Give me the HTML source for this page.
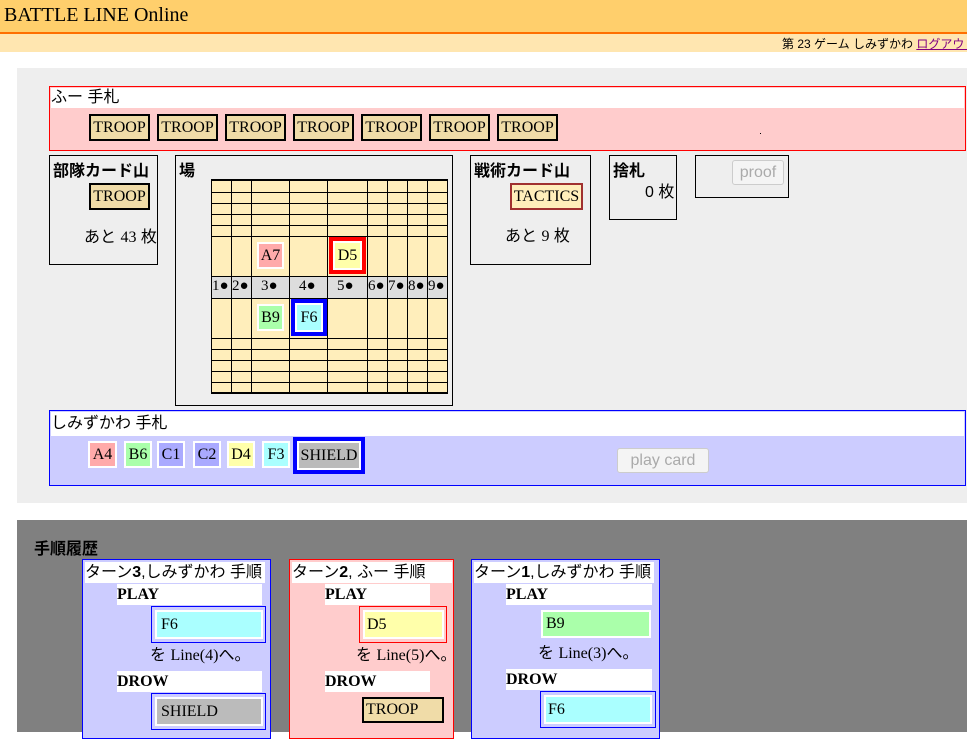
<!DOCTYPE html>
<html><head><meta charset="utf-8"><style>
*{margin:0;padding:0;box-sizing:border-box}
body{width:967px;height:732px;overflow:hidden;position:relative;background:#fff;font-family:"Liberation Serif","Noto Serif CJK SC",serif;font-size:16px;color:#000}
div,span{position:absolute}
.g{font-family:"Liberation Sans","Noto Sans CJK JP",sans-serif}
.bx{border:1px solid #000}
.c{display:flex;align-items:center;justify-content:center;font-size:16px}
.tr{background:#f0dca8;border:2px solid #000}
.w{border:2px solid #fff}
.t{font-family:"Liberation Sans","Noto Sans CJK JP",sans-serif;font-weight:bold;font-size:16px}
.btn{border:1px solid #ccc;border-radius:3px;background:#f4f4f4;color:#aaa;font-family:"Liberation Sans",sans-serif;font-size:16px;display:flex;align-items:center;justify-content:center}
.hl{left:0;height:1px;width:100%;background:#000}
.vl{top:0;width:1px;height:100%;background:#000}
</style></head><body>
<div style="left:0;top:0;width:967px;height:32px;background:#ffcf6c"></div>
<div style="left:0;top:32px;width:967px;height:2px;background:#ff6f00"></div>
<div style="left:4px;top:4px;font-size:20px">BATTLE LINE Online</div>
<div style="left:0;top:34px;width:967px;height:18px;background:#ffe6b0"></div>
<div class="g" style="left:782px;top:35px;font-size:12px;white-space:nowrap">第 23 ゲーム しみずかわ <span style="position:static;color:#800080;text-decoration:underline">ログアウト</span></div>

<div style="left:17px;top:68px;width:950px;height:435px;background:#eee"></div>
<div style="left:49px;top:86px;width:917px;height:65px;border:1px solid #f00;background:#ffcccc"></div>
<div class="g" style="left:51px;top:88px;width:913px;height:20px;background:#fff;font-size:16px;line-height:20px">ふー 手札</div>
<div class="c tr" style="left:89px;top:114px;width:61px;height:27px">TROOP</div>
<div class="c tr" style="left:157px;top:114px;width:61px;height:27px">TROOP</div>
<div class="c tr" style="left:225px;top:114px;width:61px;height:27px">TROOP</div>
<div class="c tr" style="left:293px;top:114px;width:61px;height:27px">TROOP</div>
<div class="c tr" style="left:361px;top:114px;width:61px;height:27px">TROOP</div>
<div class="c tr" style="left:429px;top:114px;width:61px;height:27px">TROOP</div>
<div class="c tr" style="left:497px;top:114px;width:61px;height:27px">TROOP</div>
<div style="left:760px;top:133px;width:1px;height:1px;background:#000"></div>

<div class="bx" style="left:49px;top:155px;width:109px;height:110px"></div>
<div class="t" style="left:53px;top:157px">部隊カード山</div>
<div class="c tr" style="left:89px;top:183px;width:61px;height:27px">TROOP</div>
<div class="g" style="left:84px;top:223px;font-size:16px">あと <span style="position:static;font-family:'Liberation Serif'">43</span> 枚</div>

<div class="bx" style="left:175px;top:155px;width:278px;height:251px"></div>
<div class="t" style="left:179px;top:157px">場</div>
<div style="left:211px;top:179px;width:237px;height:215px;background:#ffeebb;border-top:2px solid #000;border-bottom:2px solid #000;border-left:1px solid #000;border-right:1px solid #000">
<div style="left:0;top:95px;width:100%;height:22px;background:#ddd"></div>
<div class="hl" style="top:11px"></div><div class="hl" style="top:22px"></div><div class="hl" style="top:33px"></div><div class="hl" style="top:44px"></div><div class="hl" style="top:55px"></div>
<div class="hl" style="top:95px"></div><div class="hl" style="top:117px"></div>
<div class="hl" style="top:157px"></div><div class="hl" style="top:168px"></div><div class="hl" style="top:179px"></div><div class="hl" style="top:190px"></div><div class="hl" style="top:201px"></div>
<div class="vl" style="left:19px"></div><div class="vl" style="left:39px"></div><div class="vl" style="left:77px"></div><div class="vl" style="left:115px"></div><div class="vl" style="left:155px"></div><div class="vl" style="left:175px"></div><div class="vl" style="left:195px"></div><div class="vl" style="left:215px"></div>
</div>
<div style="left:211px;top:276px;width:237px;font-size:15px;line-height:20px">
<span style="left:1px">1●</span><span style="left:21px">2●</span><span style="left:50px">3●</span><span style="left:88px">4●</span><span style="left:126px">5●</span><span style="left:157px">6●</span><span style="left:177px">7●</span><span style="left:197px">8●</span><span style="left:217px">9●</span></div>
<div class="c w" style="left:257px;top:242px;width:27px;height:27px;background:#ffaaaa">A7</div>
<div class="c" style="left:329px;top:237px;width:37px;height:37px;border:4px solid #f00;background:#fff"><div class="c" style="left:2px;top:2px;width:25px;height:25px;background:#ffffaa">D5</div></div>
<div class="c w" style="left:257px;top:304px;width:27px;height:27px;background:#aaffaa">B9</div>
<div class="c" style="left:291px;top:299px;width:36px;height:37px;border:4px solid #00f;background:#fff"><div class="c" style="left:2px;top:2px;width:24px;height:25px;background:#aaffff">F6</div></div>

<div class="bx" style="left:470px;top:155px;width:121px;height:110px"></div>
<div class="t" style="left:474px;top:157px">戦術カード山</div>
<div class="c" style="left:510px;top:183px;width:73px;height:27px;border:2px solid #a03030;background:#ffeebb">TACTICS</div>
<div class="g" style="left:505px;top:222px">あと <span style="position:static;font-family:'Liberation Serif'">9</span> 枚</div>
<div class="bx" style="left:609px;top:155px;width:68px;height:65px"></div>
<div class="t" style="left:613px;top:157px">捨札</div>
<div class="g" style="left:645px;top:178px">0 枚</div>
<div class="bx" style="left:695px;top:155px;width:94px;height:43px"></div>
<div class="btn" style="left:732px;top:160px;width:52px;height:25px">proof</div>

<div style="left:49px;top:410px;width:917px;height:76px;border:1px solid #00f;background:#ccccff"></div>
<div class="g" style="left:51px;top:412px;width:913px;height:24px;background:#fff;line-height:24px">しみずかわ 手札</div>
<div class="c w" style="left:88px;top:441px;width:29px;height:27px;background:#ffaaaa">A4</div>
<div class="c w" style="left:124px;top:441px;width:28px;height:27px;background:#aaffaa">B6</div>
<div class="c w" style="left:157px;top:441px;width:28px;height:27px;background:#aaaaff">C1</div>
<div class="c w" style="left:193px;top:441px;width:28px;height:27px;background:#aaaaff">C2</div>
<div class="c w" style="left:227px;top:441px;width:28px;height:27px;background:#ffffaa">D4</div>
<div class="c w" style="left:262px;top:441px;width:28px;height:27px;background:#aaffff">F3</div>
<div class="c" style="left:293px;top:437px;width:72px;height:37px;border:4px solid #00f;background:#fff"><div class="c" style="left:2px;top:2px;width:60px;height:25px;background:#bbb">SHIELD</div></div>
<div class="btn" style="left:617px;top:448px;width:92px;height:25px">play card</div>

<div style="left:17px;top:520px;width:950px;height:212px;background:#808080"></div>
<div class="t" style="left:34px;top:535px">手順履歴</div>

<div style="left:82px;top:559px;width:189px;height:180px;border:1px solid #00f;background:#ccccff"></div>
<div class="g" style="left:85px;top:562px;width:180px;height:21px;background:#fff;line-height:21px;white-space:nowrap">ターン<b>3</b>,しみずかわ 手順</div>
<div class="t" style="left:117px;top:584px;width:145px;height:21px;background:#fff;font-family:'Liberation Serif';line-height:21px">PLAY</div>
<div style="left:151px;top:606px;width:115px;height:37px;border:1px solid #00f"></div>
<div style="left:155px;top:610px;width:108px;height:29px;border:2px solid #fff;background:#aaffff;padding-left:4px;line-height:25px">F6</div>
<div class="g" style="left:150px;top:641px;font-size:16px">を <span style="position:static;font-family:'Liberation Serif'">Line(4)</span>へ。</div>
<div class="t" style="left:117px;top:671px;width:145px;height:21px;background:#fff;font-family:'Liberation Serif';line-height:21px">DROW</div>
<div style="left:151px;top:693px;width:115px;height:37px;border:1px solid #00f"></div>
<div style="left:155px;top:697px;width:108px;height:29px;border:2px solid #fff;background:#bbb;padding-left:4px;line-height:25px">SHIELD</div>

<div style="left:289px;top:559px;width:165px;height:180px;border:1px solid #f00;background:#ffcccc"></div>
<div class="g" style="left:292px;top:562px;width:160px;height:21px;background:#fff;line-height:21px;white-space:nowrap">ターン<b>2</b>, ふー 手順</div>
<div class="t" style="left:325px;top:584px;width:105px;height:21px;background:#fff;font-family:'Liberation Serif';line-height:21px">PLAY</div>
<div style="left:359px;top:606px;width:88px;height:37px;border:1px solid #f00"></div>
<div style="left:363px;top:610px;width:81px;height:29px;border:2px solid #fff;background:#ffffaa;padding-left:2px;line-height:25px">D5</div>
<div class="g" style="left:356px;top:641px">を <span style="position:static;font-family:'Liberation Serif'">Line(5)</span>へ。</div>
<div class="t" style="left:325px;top:671px;width:105px;height:21px;background:#fff;font-family:'Liberation Serif';line-height:21px">DROW</div>
<div style="left:362px;top:697px;width:82px;height:26px;border:2px solid #000;background:#f0dca8;padding-left:2px;line-height:22px">TROOP</div>

<div style="left:471px;top:559px;width:189px;height:180px;border:1px solid #00f;background:#ccccff"></div>
<div class="g" style="left:474px;top:562px;width:180px;height:21px;background:#fff;line-height:21px;white-space:nowrap">ターン<b>1</b>,しみずかわ 手順</div>
<div class="t" style="left:506px;top:584px;width:146px;height:21px;background:#fff;font-family:'Liberation Serif';line-height:21px">PLAY</div>
<div style="left:541px;top:610px;width:110px;height:28px;border:2px solid #fff;background:#aaffaa;padding-left:3px;line-height:24px">B9</div>
<div class="g" style="left:538px;top:639px">を <span style="position:static;font-family:'Liberation Serif'">Line(3)</span>へ。</div>
<div class="t" style="left:506px;top:669px;width:146px;height:21px;background:#fff;font-family:'Liberation Serif';line-height:21px">DROW</div>
<div style="left:540px;top:691px;width:116px;height:37px;border:1px solid #00f"></div>
<div style="left:544px;top:695px;width:108px;height:29px;border:2px solid #fff;background:#aaffff;padding-left:2px;line-height:25px">F6</div>
</body></html>
